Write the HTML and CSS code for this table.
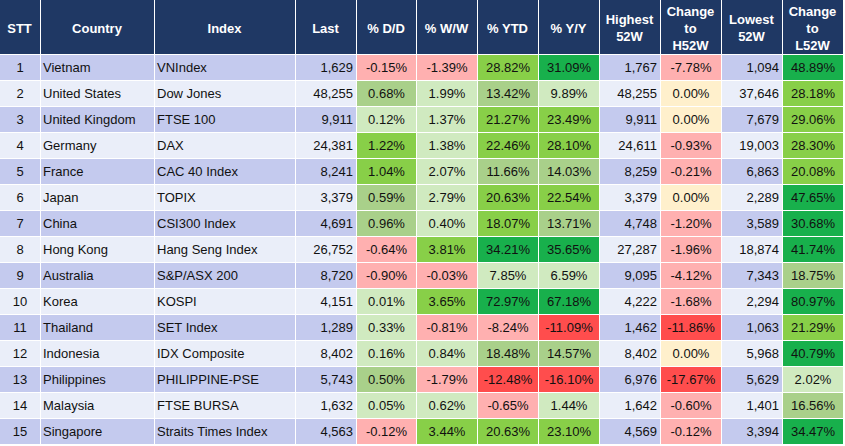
FILE: index.html
```html
<!DOCTYPE html>
<html>
<head>
<meta charset="utf-8">
<link rel="stylesheet" href="styles.css">
</head>
<body>
<table class="mkt">
<thead>
<tr>
<th class="c-stt">STT</th>
<th class="c-country">Country</th>
<th class="c-index">Index</th>
<th class="c-num">Last</th>
<th class="c-dd">% D/D</th>
<th class="c-num">% W/W</th>
<th class="c-num">% YTD</th>
<th class="c-num">% Y/Y</th>
<th class="c-num">Highest<br>52W</th>
<th class="c-num">Change<br>to<br>H52W</th>
<th class="c-num">Lowest<br>52W</th>
<th class="c-num">Change<br>to<br>L52W</th>
</tr>
</thead>
<tbody>
<tr class="odd"><td class="stt">1</td><td class="txt">Vietnam</td><td class="txt">VNIndex</td><td class="num">1,629</td><td class="pct r1">-0.15%</td><td class="pct r1">-1.39%</td><td class="pct g3">28.82%</td><td class="pct g4">31.09%</td><td class="num">1,767</td><td class="pct r1">-7.78%</td><td class="num">1,094</td><td class="pct g4">48.89%</td></tr>
<tr class="even"><td class="stt">2</td><td class="txt">United States</td><td class="txt">Dow Jones</td><td class="num">48,255</td><td class="pct g2">0.68%</td><td class="pct g1">1.99%</td><td class="pct g2">13.42%</td><td class="pct g1">9.89%</td><td class="num">48,255</td><td class="pct y">0.00%</td><td class="num">37,646</td><td class="pct g3">28.18%</td></tr>
<tr class="odd"><td class="stt">3</td><td class="txt">United Kingdom</td><td class="txt">FTSE 100</td><td class="num">9,911</td><td class="pct g1">0.12%</td><td class="pct g1">1.37%</td><td class="pct g3">21.27%</td><td class="pct g3">23.49%</td><td class="num">9,911</td><td class="pct y">0.00%</td><td class="num">7,679</td><td class="pct g3">29.06%</td></tr>
<tr class="even"><td class="stt">4</td><td class="txt">Germany</td><td class="txt">DAX</td><td class="num">24,381</td><td class="pct g3">1.22%</td><td class="pct g1">1.38%</td><td class="pct g3">22.46%</td><td class="pct g3">28.10%</td><td class="num">24,611</td><td class="pct r1">-0.93%</td><td class="num">19,003</td><td class="pct g3">28.30%</td></tr>
<tr class="odd"><td class="stt">5</td><td class="txt">France</td><td class="txt">CAC 40 Index</td><td class="num">8,241</td><td class="pct g3">1.04%</td><td class="pct g1">2.07%</td><td class="pct g2">11.66%</td><td class="pct g2">14.03%</td><td class="num">8,259</td><td class="pct r1">-0.21%</td><td class="num">6,863</td><td class="pct g3">20.08%</td></tr>
<tr class="even"><td class="stt">6</td><td class="txt">Japan</td><td class="txt">TOPIX</td><td class="num">3,379</td><td class="pct g2">0.59%</td><td class="pct g1">2.79%</td><td class="pct g3">20.63%</td><td class="pct g3">22.54%</td><td class="num">3,379</td><td class="pct y">0.00%</td><td class="num">2,289</td><td class="pct g4">47.65%</td></tr>
<tr class="odd"><td class="stt">7</td><td class="txt">China</td><td class="txt">CSI300 Index</td><td class="num">4,691</td><td class="pct g2">0.96%</td><td class="pct g1">0.40%</td><td class="pct g3">18.07%</td><td class="pct g2">13.71%</td><td class="num">4,748</td><td class="pct r1">-1.20%</td><td class="num">3,589</td><td class="pct g4">30.68%</td></tr>
<tr class="even"><td class="stt">8</td><td class="txt">Hong Kong</td><td class="txt">Hang Seng Index</td><td class="num">26,752</td><td class="pct r1">-0.64%</td><td class="pct g3">3.81%</td><td class="pct g4">34.21%</td><td class="pct g4">35.65%</td><td class="num">27,287</td><td class="pct r1">-1.96%</td><td class="num">18,874</td><td class="pct g4">41.74%</td></tr>
<tr class="odd"><td class="stt">9</td><td class="txt">Australia</td><td class="txt">S&amp;P/ASX 200</td><td class="num">8,720</td><td class="pct r1">-0.90%</td><td class="pct r1">-0.03%</td><td class="pct g1">7.85%</td><td class="pct g1">6.59%</td><td class="num">9,095</td><td class="pct r1">-4.12%</td><td class="num">7,343</td><td class="pct g2">18.75%</td></tr>
<tr class="even"><td class="stt">10</td><td class="txt">Korea</td><td class="txt">KOSPI</td><td class="num">4,151</td><td class="pct g1">0.01%</td><td class="pct g3">3.65%</td><td class="pct g4">72.97%</td><td class="pct g4">67.18%</td><td class="num">4,222</td><td class="pct r1">-1.68%</td><td class="num">2,294</td><td class="pct g4">80.97%</td></tr>
<tr class="odd"><td class="stt">11</td><td class="txt">Thailand</td><td class="txt">SET Index</td><td class="num">1,289</td><td class="pct g1">0.33%</td><td class="pct r1">-0.81%</td><td class="pct r1">-8.24%</td><td class="pct r2">-11.09%</td><td class="num">1,462</td><td class="pct r2">-11.86%</td><td class="num">1,063</td><td class="pct g3">21.29%</td></tr>
<tr class="even"><td class="stt">12</td><td class="txt">Indonesia</td><td class="txt">IDX Composite</td><td class="num">8,402</td><td class="pct g1">0.16%</td><td class="pct g1">0.84%</td><td class="pct g2">18.48%</td><td class="pct g2">14.57%</td><td class="num">8,402</td><td class="pct y">0.00%</td><td class="num">5,968</td><td class="pct g4">40.79%</td></tr>
<tr class="odd"><td class="stt">13</td><td class="txt">Philippines</td><td class="txt">PHILIPPINE-PSE</td><td class="num">5,743</td><td class="pct g2">0.50%</td><td class="pct r1">-1.79%</td><td class="pct r2">-12.48%</td><td class="pct r2">-16.10%</td><td class="num">6,976</td><td class="pct r2">-17.67%</td><td class="num">5,629</td><td class="pct g1">2.02%</td></tr>
<tr class="even"><td class="stt">14</td><td class="txt">Malaysia</td><td class="txt">FTSE BURSA</td><td class="num">1,632</td><td class="pct g1">0.05%</td><td class="pct g1">0.62%</td><td class="pct r1">-0.65%</td><td class="pct g1">1.44%</td><td class="num">1,642</td><td class="pct r1">-0.60%</td><td class="num">1,401</td><td class="pct g2">16.56%</td></tr>
<tr class="odd"><td class="stt">15</td><td class="txt">Singapore</td><td class="txt">Straits Times Index</td><td class="num">4,563</td><td class="pct r1">-0.12%</td><td class="pct g3">3.44%</td><td class="pct g3">20.63%</td><td class="pct g3">23.10%</td><td class="num">4,569</td><td class="pct r1">-0.12%</td><td class="num">3,394</td><td class="pct g4">34.47%</td></tr>
</tbody>
</table>
</body>
</html>
```

FILE: styles.css
```css
html, body {
  margin: 0;
  padding: 0;
  background: #ffffff;
}

.mkt {
  border-collapse: separate;
  border-spacing: 0;
  table-layout: fixed;
  width: 844px;
  font-family: "Liberation Sans", Arial, sans-serif;
  font-size: 13px;
  color: #111111;
}

.mkt th,
.mkt td {
  box-sizing: border-box;
  border-right: 1px solid #ffffff;
  border-bottom: 1px solid #ffffff;
  padding: 0 3px 0 2px;
  white-space: nowrap;
  overflow: hidden;
}

.mkt th {
  height: 55px;
  padding-top: 2px;
  background: #1f3864;
  color: #ffffff;
  font-weight: bold;
  line-height: 17px;
  text-align: center;
  vertical-align: middle;
  width: 61px;
}

.mkt th.c-stt { width: 41px; }
.mkt th.c-country { width: 114px; }
.mkt th.c-index { width: 141px; }
.mkt th.c-dd { width: 60px; }

.mkt td {
  height: 26px;
  padding-top: 1px;
  line-height: 24px;
  vertical-align: middle;
}

.odd td { background: #c4caee; }
.even td { background: #eaeef9; }

.mkt td.stt { text-align: center; padding-left: 0; padding-right: 0; }
.mkt td.txt { text-align: left; }
.mkt td.num { text-align: right; }
.mkt td.pct { text-align: center; padding-left: 0; padding-right: 0; }

.mkt td.r1 { background: #ffb0b0; }
.mkt td.r2 { background: #ff4d4d; }
.mkt td.y { background: #fff0cc; }
.mkt td.g1 { background: #d0eac0; }
.mkt td.g2 { background: #a9d08a; }
.mkt td.g3 { background: #88cf48; }
.mkt td.g4 { background: #18b04c; }
```
